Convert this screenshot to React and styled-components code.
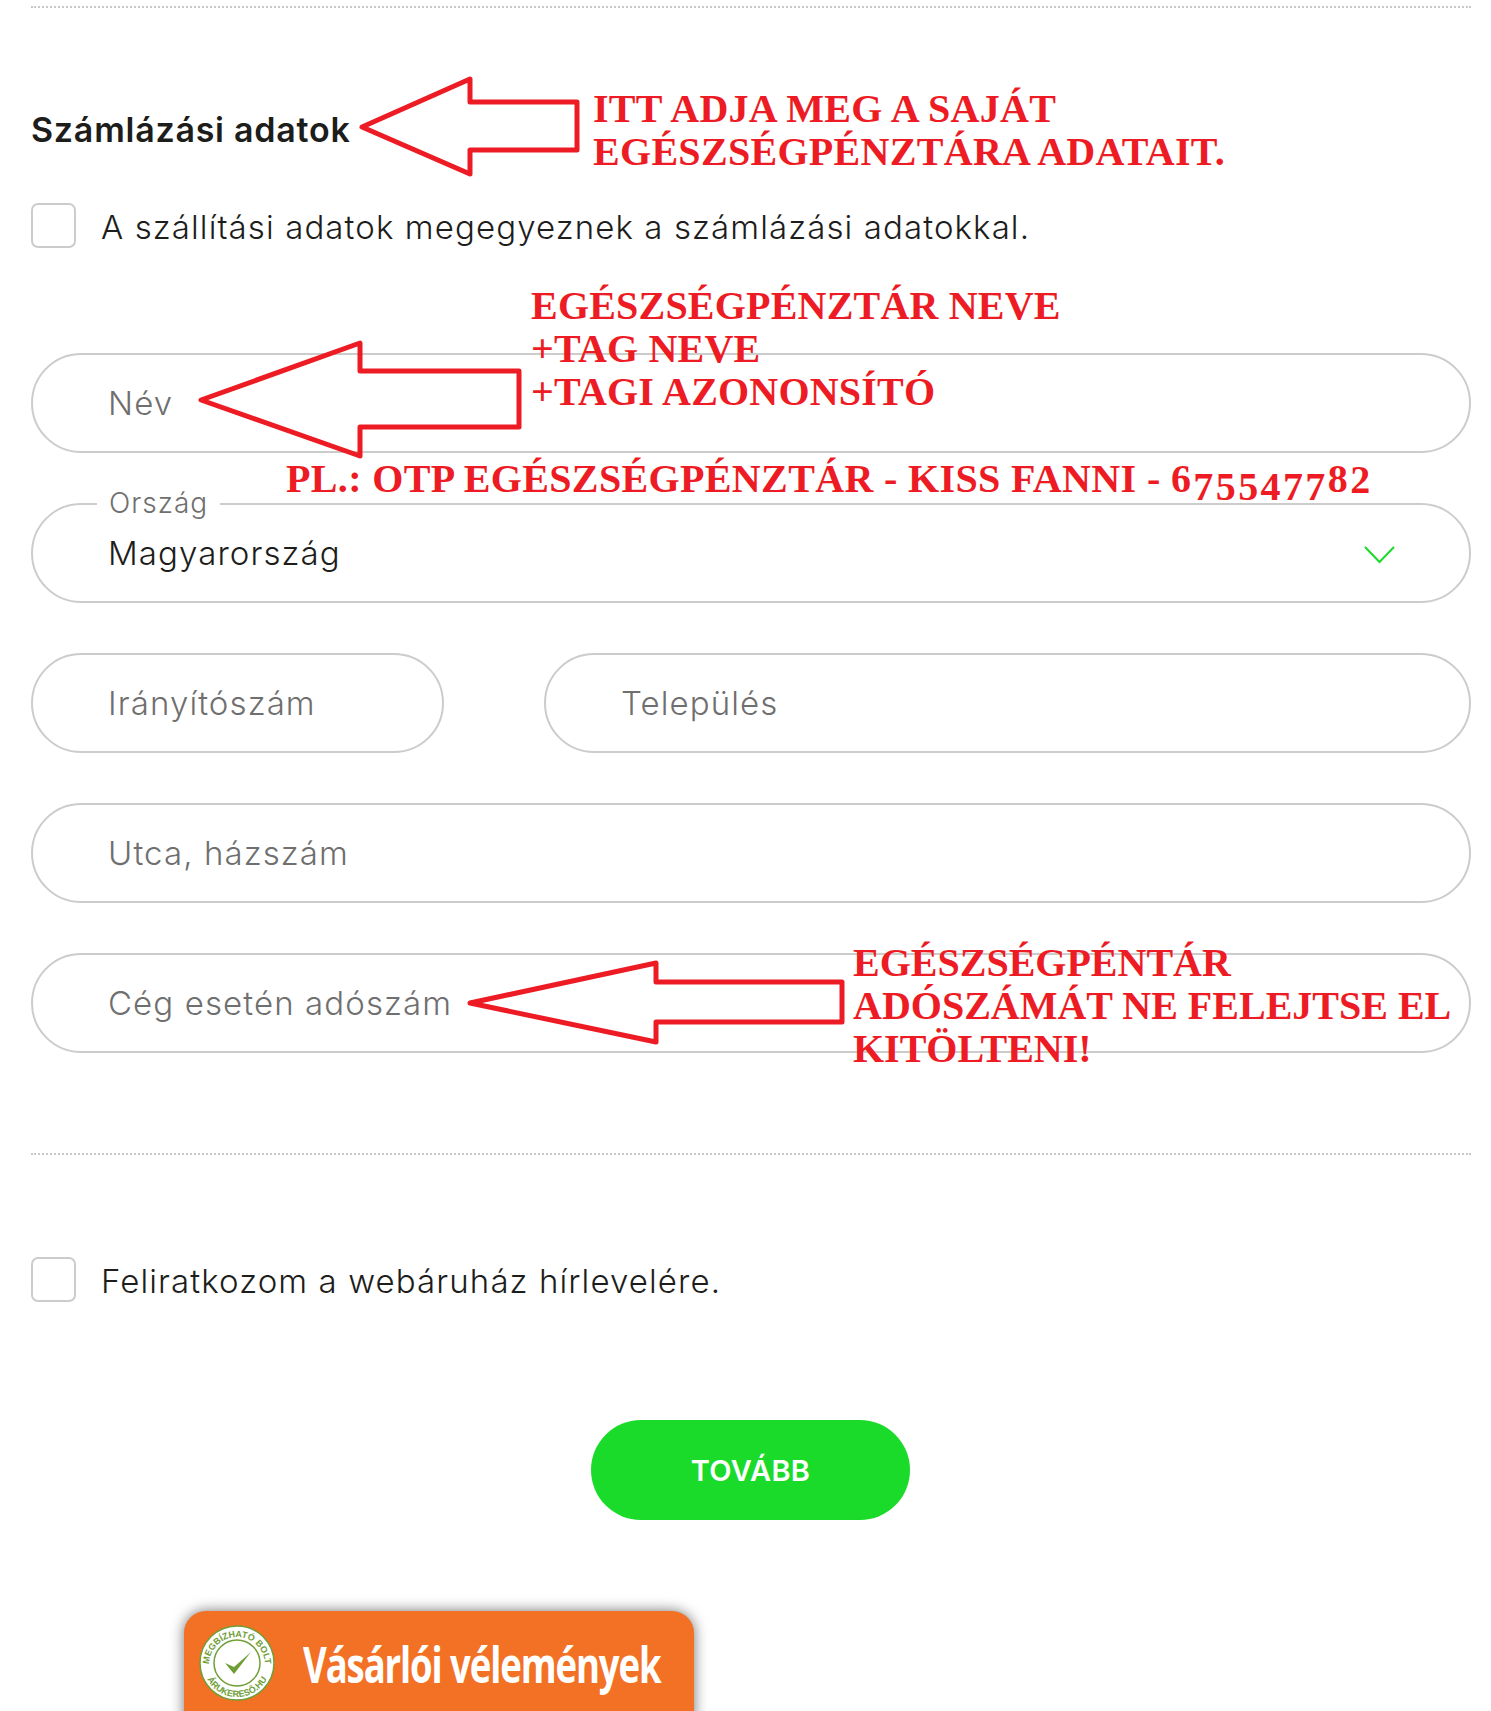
import styled, { createGlobalStyle } from "styled-components";

const GlobalStyle = createGlobalStyle`
  html, body { margin: 0; padding: 0; background: #fff; }
  * { box-sizing: border-box; }
`;

const Page = styled.div`
  position: relative;
  width: 1491px;
  height: 1711px;
  overflow: hidden;
  padding: 6px 20px 0 31px;
  font-family: "Inter", "Noto Sans", sans-serif;
  color: #1d1d1b;
`;

const Divider = styled.div`
  border-top: 2px dotted #c8c8c8;
  margin-top: ${(p) => p.$top || 0}px;
`;

const Title = styled.h2`
  margin: 100px 0 0;
  font-size: 34px;
  line-height: 44px;
  font-weight: 600;
  letter-spacing: 0.75px;
`;

const CheckRow = styled.label`
  display: flex;
  align-items: center;
  gap: 25px;
  margin-top: ${(p) => p.$top}px;
  font-size: 33px;
  font-weight: 300;
  letter-spacing: 1.1px;
`;

const CheckText = styled.span`
  padding-top: 2px;
`;

const Box = styled.span`
  width: 45px;
  height: 45px;
  flex: none;
  border: 2px solid #ccc;
  border-radius: 7px;
`;

const Fields = styled.div`
  display: flex;
  flex-direction: column;
  gap: 50px;
  margin-top: 105px;
`;

const Row = styled.div`
  display: grid;
  grid-template-columns: 413px 927px;
  justify-content: space-between;
`;

const Field = styled.div`
  position: relative;
  height: 100px;
  border: 2px solid #ccc;
  border-radius: 50px;
  padding: 0 75px;
  display: flex;
  align-items: center;
  font-size: 33px;
  font-weight: 300;
  letter-spacing: 1.1px;
  color: ${(p) => (p.$value ? "#1d1d1b" : "#6f6f6f")};
`;

const Legend = styled.span`
  position: absolute;
  left: 64px;
  top: -19px;
  padding: 0 12px;
  background: #fff;
  font-size: 28px;
  line-height: 34px;
  font-weight: 300;
  letter-spacing: 1px;
  color: #6f6f6f;
`;

const Chevron = styled.svg`
  position: absolute;
  right: 74px;
  top: 41px;
`;

const Actions = styled.div`
  display: flex;
  justify-content: center;
  margin-top: 118px;
  padding-right: 1px;
`;

const NextButton = styled.button`
  width: 319px;
  height: 100px;
  border: 0;
  border-radius: 50px;
  background: #1adb2a;
  color: #fff;
  font-family: inherit;
  font-size: 29px;
  font-weight: 600;
  letter-spacing: 0.3px;
`;

const Reviews = styled.div`
  display: flex;
  align-items: flex-start;
  gap: 28px;
  width: 510px;
  height: 130px;
  margin: 91px 0 0 153px;
  padding: 14px 0 0 15px;
  border-radius: 22px 22px 0 0;
  background: #f37124;
  box-shadow: 0 0 14px rgba(0, 0, 0, 0.55);
`;

const BadgeIcon = styled.svg`
  flex: none;
`;

const ReviewsText = styled.span`
  display: block;
  flex: none;
  margin-top: 5px;
  font-family: "Open Sans", sans-serif;
  font-size: 50px;
  line-height: 68px;
  font-weight: 700;
  color: #fff;
  white-space: nowrap;
  letter-spacing: -1.5px;
  transform: scaleX(0.73);
  transform-origin: left center;
`;

const Note = styled.div`
  position: absolute;
  left: ${(p) => p.$x}px;
  top: ${(p) => p.$y}px;
  font-family: "Liberation Serif", "Times New Roman", serif;
  font-size: 40px;
  line-height: 43px;
  font-weight: 700;
  letter-spacing: ${(p) => p.$spacing}px;
  color: #ed1c24;
  white-space: nowrap;
`;

const Digits = styled.span`
  letter-spacing: 2.4px;
`;

const Digit = styled.span`
  vertical-align: ${(p) => p.$drop || 0}px;
`;

const Arrow = styled.svg`
  position: absolute;
  left: 0;
  top: 0;
  pointer-events: none;
`;

const ARROWS = [
  "362,127 470,79 470,102 577,102 577,150 470,150 470,174",
  "201,400 360,343 360,371 519,371 519,427 360,427 360,456",
  "470,1003 656,963 656,982 842,982 842,1022 656,1022 656,1042",
];

const Badge = () => (
  <BadgeIcon width="76" height="76" viewBox="0 0 76 76">
    <defs>
      <path id="topArc" d="M10 40 A28 28 0 0 1 66 40" />
      <path id="bottomArc" d="M4 38 A34 34 0 0 0 72 38" />
    </defs>
    <circle cx="38" cy="38" r="37" fill="#fff" stroke="#6f9e35" strokeWidth="1.5" />
    <circle cx="38" cy="38" r="23" fill="#fff" stroke="#6f9e35" strokeWidth="1.5" />
    <text fill="#6f9e35" fontFamily="Liberation Sans, sans-serif" fontSize="9" fontWeight="700">
      <textPath href="#topArc" startOffset="50%" textAnchor="middle">MEGBÍZHATÓ BOLT</textPath>
    </text>
    <text fill="#6f9e35" fontFamily="Liberation Sans, sans-serif" fontSize="9" fontWeight="700">
      <textPath href="#bottomArc" startOffset="50%" textAnchor="middle">ÁRUKERESŐ.HU</textPath>
    </text>
    <path d="M26 38 L35 49 L52 27 L35 42 Z" fill="#6f9e35" />
  </BadgeIcon>
);

export default function App() {
  return (
    <Page>
      <GlobalStyle />
      <Divider />
      <Title>Számlázási adatok</Title>
      <CheckRow $top={51}>
        <Box />
        <CheckText>A szállítási adatok megegyeznek a számlázási adatokkal.</CheckText>
      </CheckRow>

      <Fields>
        <Field>Név</Field>
        <Field $value>
          <Legend>Ország</Legend>
          Magyarország
          <Chevron width="31" height="18" viewBox="0 0 31 18">
            <path d="M1 1 L15.5 16 L30 1" fill="none" stroke="#1adb2a" strokeWidth="2" />
          </Chevron>
        </Field>
        <Row>
          <Field>Irányítószám</Field>
          <Field>Település</Field>
        </Row>
        <Field>Utca, házszám</Field>
        <Field>Cég esetén adószám</Field>
      </Fields>

      <Divider $top={100} />
      <CheckRow $top={102}>
        <Box />
        <CheckText>Feliratkozom a webáruház hírlevelére.</CheckText>
      </CheckRow>

      <Actions>
        <NextButton>TOVÁBB</NextButton>
      </Actions>

      <Reviews>
        <Badge />
        <ReviewsText>Vásárlói vélemények</ReviewsText>
      </Reviews>

      <Arrow width="1491" height="1711">
        {ARROWS.map((points) => (
          <polygon key={points} points={points} fill="none" stroke="#ed1c24" strokeWidth="5" strokeLinejoin="round" />
        ))}
      </Arrow>

      <Note $x={593} $y={87} $spacing={0.3}>ITT ADJA MEG A SAJÁT<br />EGÉSZSÉGPÉNZTÁRA ADATAIT.</Note>
      <Note $x={531} $y={284} $spacing={0.2}>EGÉSZSÉGPÉNZTÁR NEVE<br />+TAG NEVE<br />+TAGI AZONONSÍTÓ</Note>
      <Note $x={286} $y={457} $spacing={0.36}>
        PL.: OTP EGÉSZSÉGPÉNZTÁR - KISS FANNI - <Digits>6<Digit $drop={-8}>755477</Digit>8<Digit $drop={-1}>2</Digit></Digits>
      </Note>
      <Note $x={853} $y={941} $spacing={0}>EGÉSZSÉGPÉNTÁR<br />ADÓSZÁMÁT NE FELEJTSE EL<br />KITÖLTENI!</Note>
    </Page>
  );
}
